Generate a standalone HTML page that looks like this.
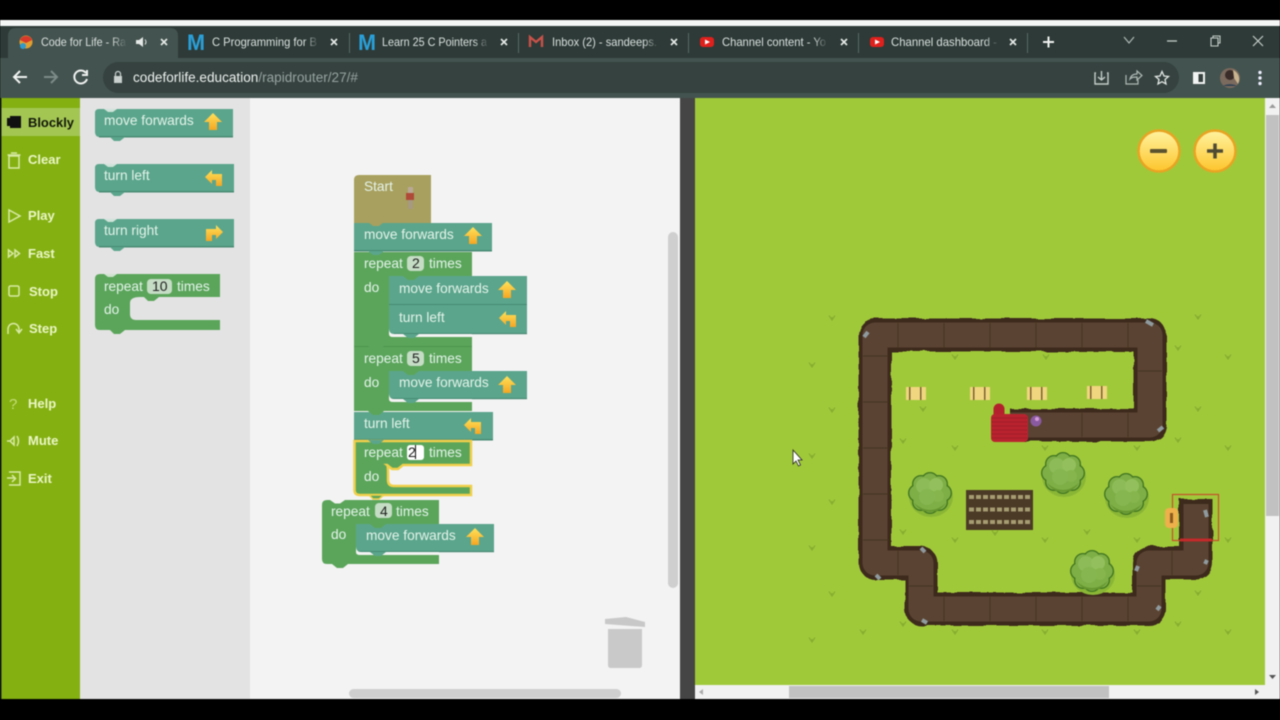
<!DOCTYPE html>
<html><head><meta charset="utf-8"><title>Code for Life</title>
<style>
html,body{margin:0;padding:0;background:#000;width:1280px;height:720px;overflow:hidden}
svg{display:block;font-family:"Liberation Sans",Arial,sans-serif;filter:blur(.4px)}
.tab{font-size:12px;fill:#d9e0de}
.side{font-size:13px;font-weight:bold;fill:#eaf6c4}
.b{font-size:13.7px;fill:#e4f3ea}
.f{font-size:14px;fill:#222}
.ic{fill:none;stroke:#d8e9a4;stroke-width:1.5}
.x{stroke:#e4e8e6;stroke-width:1.7;fill:none}
.tl{stroke:#c4cdca;stroke-width:1.4;fill:none}
</style></head><body>
<svg width="1280" height="720" viewBox="0 0 1280 720" xmlns="http://www.w3.org/2000/svg">
<defs>
<linearGradient id="y" x1="0" y1="0" x2="0" y2="1"><stop offset="0" stop-color="#ffe25a"/><stop offset="1" stop-color="#f5a623"/></linearGradient>
<linearGradient id="z" x1="0" y1="0" x2="0" y2="1"><stop offset="0" stop-color="#fff3a0"/><stop offset="1" stop-color="#fdc52c"/></linearGradient>
<linearGradient id="fa"><stop offset="0" stop-color="#43534f" stop-opacity="0"/><stop offset="1" stop-color="#43534f"/></linearGradient>
<linearGradient id="fb"><stop offset="0" stop-color="#2d3a37" stop-opacity="0"/><stop offset="1" stop-color="#2d3a37"/></linearGradient>
<filter id="wob"><feTurbulence type="fractalNoise" baseFrequency="0.07" numOctaves="2" seed="4"/><feDisplacementMap in="SourceGraphic" scale="4"/></filter>
<symbol id="up" overflow="visible"><path d="M0-9 9 0H4V8H-4V0H-9Z" fill="url(#y)"/></symbol>
<symbol id="lf" overflow="visible"><path d="M-9-1-2-8V-4H8V8H2V2H-2V6Z" fill="url(#y)"/></symbol>
<symbol id="rt" overflow="visible"><path d="M9-1 2-8V-4H-8V8H-2V2H2V6Z" fill="url(#y)"/></symbol>
<symbol id="t" overflow="visible"><path d="M-3-2.500 0 2 3-2.500M0 2V-1" stroke="#86ae30" stroke-width="1.200" fill="none"/></symbol>
<symbol id="hay" overflow="visible"><rect x="0" y="0" width="20" height="13" fill="#f0d67f"/><rect x="3" width="1.500" height="13" fill="#7a6330"/><rect x="14" width="1.500" height="13" fill="#7a6330"/></symbol>
<symbol id="bush" overflow="visible"><ellipse cx="1" cy="4" rx="22" ry="20" fill="#8ab636"/>
<g fill="#3f7420"><circle cx="13" cy="0" r="9"/><circle cx="9" cy="9" r="9"/><circle cx="0" cy="12" r="9"/><circle cx="-9" cy="9" r="9"/><circle cx="-13" cy="0" r="9"/><circle cx="-9" cy="-9" r="9"/><circle cx="0" cy="-12" r="9"/><circle cx="9" cy="-9" r="9"/></g>
<g fill="#7eae46"><circle cx="13" cy="0" r="7.700"/><circle cx="9" cy="9" r="7.700"/><circle cx="0" cy="12" r="7.700"/><circle cx="-9" cy="9" r="7.700"/><circle cx="-13" cy="0" r="7.700"/><circle cx="-9" cy="-9" r="7.700"/><circle cx="0" cy="-12" r="7.700"/><circle cx="9" cy="-9" r="7.700"/><circle r="15"/></g>
<circle cx="-6" cy="-7" r="8" fill="#8cbb58"/><circle cx="6" cy="-8" r="7" fill="#93c05c"/><circle cx="8" cy="3" r="6" fill="#86b54e"/><circle cx="-3" cy="4" r="8" fill="#86b650"/><path d="M-16 10Q0 24 16 10Q10 19 0 19Q-10 19-16 10Z" fill="#66962f"/></symbol>
<symbol id="c" overflow="visible"><path d="M-3-3 3 3M3-3-3 3" class="x"/></symbol>
</defs>
<rect width="1280" height="720" fill="#000"/>
<rect y="20" width="1280" height="6" fill="#f4f6f5"/>
<rect y="26" width="1280" height="32" fill="#2d3a37"/>
<rect y="58" width="1280" height="40" fill="#43534f"/>
<path d="M8 58V36Q8 28 16 28H170Q178 28 178 36V58Z" fill="#43534f"/>
<rect x="103" y="62" width="1076" height="31" rx="15.500" fill="#35423f"/>
<!-- tabs -->
<circle cx="26" cy="42" r="6.500" fill="#e0a030"/><path d="M20 40A6.500 6.500 0 0 1 32 40L26 43Z" fill="#d8392b"/><circle cx="23" cy="46" r="3" fill="#2e9ad0"/>
<text x="41" y="46" class="tab" textLength="85" lengthAdjust="spacingAndGlyphs">Code for Life - Ra</text>
<rect x="112" y="34" width="15" height="16" fill="url(#fa)"/>
<path d="M136 40H139L143 37V47L139 44H136Z" fill="#e4e8e6"/><path d="M145 39.500Q147 42 145 44.500" stroke="#e4e8e6" fill="none"/>
<use href="#c" x="164" y="42"/>
<text x="187" y="50" font-size="22" font-weight="bold" fill="#2a9fd8" textLength="18" lengthAdjust="spacingAndGlyphs">M</text>
<text x="212" y="46" class="tab" textLength="105" lengthAdjust="spacingAndGlyphs">C Programming for B</text>
<rect x="304" y="34" width="15" height="16" fill="url(#fb)"/>
<use href="#c" x="334" y="42"/>
<rect x="349" y="33" width="1" height="20" fill="#5a6a66"/>
<text x="358" y="50" font-size="22" font-weight="bold" fill="#2a9fd8" textLength="18" lengthAdjust="spacingAndGlyphs">M</text>
<text x="382" y="46" class="tab" textLength="105" lengthAdjust="spacingAndGlyphs">Learn 25 C Pointers a</text>
<rect x="474" y="34" width="15" height="16" fill="url(#fb)"/>
<use href="#c" x="504" y="42"/>
<rect x="518" y="33" width="1" height="20" fill="#5a6a66"/>
<path d="M530 47V37L536 42 542 37V47" fill="none" stroke="#c9524a" stroke-width="2.400"/>
<text x="552" y="46" class="tab" textLength="105" lengthAdjust="spacingAndGlyphs">Inbox (2) - sandeeps.</text>
<rect x="644" y="34" width="15" height="16" fill="url(#fb)"/>
<use href="#c" x="674" y="42"/>
<rect x="688" y="33" width="1" height="20" fill="#5a6a66"/>
<rect x="700" y="37" width="14" height="10" rx="3" fill="#e0201c"/><path d="M705 39.500 710 42 705 44.500Z" fill="#fff"/>
<text x="722" y="46" class="tab" textLength="104" lengthAdjust="spacingAndGlyphs">Channel content - Yo</text>
<rect x="813" y="34" width="15" height="16" fill="url(#fb)"/>
<use href="#c" x="844" y="42"/>
<rect x="858" y="33" width="1" height="20" fill="#5a6a66"/>
<rect x="870" y="37" width="14" height="10" rx="3" fill="#e0201c"/><path d="M875 39.500 880 42 875 44.500Z" fill="#fff"/>
<text x="891" y="46" class="tab" textLength="106" lengthAdjust="spacingAndGlyphs">Channel dashboard -</text>
<rect x="985" y="34" width="14" height="16" fill="url(#fb)"/>
<use href="#c" x="1013" y="42"/>
<rect x="1027" y="33" width="1" height="20" fill="#5a6a66"/>
<path d="M1043 42H1054M1048.500 36.500V47.500" stroke="#f0f2f1" stroke-width="2" fill="none"/>
<path d="M1124 37 1129 43 1134 37" stroke="#b0bab7" stroke-width="1.200" fill="none"/>
<path d="M1167 41H1177" stroke="#c5cdca" stroke-width="1.300"/>
<path d="M1211 38H1218V46H1211ZM1213 38V36H1220V43H1218" stroke="#c5cdca" stroke-width="1.100" fill="none"/>
<path d="M1253 36 1263 46M1263 36 1253 46" stroke="#c5cdca" stroke-width="1.200"/>
<!-- toolbar -->
<path d="M27 77H14M20 71 14 77 20 83" stroke="#f0f3f2" stroke-width="2" fill="none"/>
<path d="M44 77H57M51 71 57 77 51 83" stroke="#7d8b88" stroke-width="2" fill="none"/>
<path d="M86 73A6.500 6.500 0 1 0 87 79M87 70V75H82" stroke="#eef1f0" stroke-width="2" fill="none"/>
<rect x="114" y="76" width="8" height="7" fill="#c9d0ce"/><path d="M115.500 76V74A2.500 2.500 0 0 1 120.500 74V76" stroke="#c9d0ce" fill="none" stroke-width="1.200"/>
<text x="133" y="82" font-size="13.500" textLength="225" lengthAdjust="spacingAndGlyphs"><tspan fill="#eef1f0">codeforlife.education</tspan><tspan fill="#96a3a0">/rapidrouter/27/#</tspan></text>
<path d="M1096 73H1095V84H1108V73H1107M1101.500 71V80M1098 77 1101.500 80 1105 77" class="tl"/>
<path d="M1126 75V84H1138V80M1130 79C1131 75 1134 74 1137 74V71L1142 75.500 1137 80V77C1134 77 1132 77 1130 79Z" style="fill:none;stroke:#aeb8b5;stroke-width:1.200"/>
<path d="M1162 71.500 1164 76 1168.500 76.500 1165 79.500 1166 84 1162 81.700 1158 84 1159 79.500 1155.500 76.500 1160 76Z" fill="none" stroke="#e2e7e5" stroke-width="1.300"/>
<rect x="1193" y="72" width="12" height="12" fill="#f2f4f3"/><rect x="1198.500" y="74" width="4.500" height="8" fill="#35423f"/>
<circle cx="1230" cy="78" r="10" fill="#7b6a5e"/><circle cx="1230" cy="75" r="5" fill="#3a2c28"/><path d="M1233 70A10 10 0 0 1 1238 84L1234 78Z" fill="#c9b48f"/><path d="M1223 86A10 6 0 0 1 1237 86Z" fill="#2d4055"/>
<circle cx="1260" cy="72.500" r="1.700" fill="#eef"/><circle cx="1260" cy="78" r="1.700" fill="#eef"/><circle cx="1260" cy="83.500" r="1.700" fill="#eef"/>
<!-- page -->
<rect y="98" width="80" height="601" fill="#84b012"/>
<rect width="1.500" y="98" height="601" fill="#16200a"/>
<rect x="80" y="98" width="170" height="601" fill="#e3e3e3"/>
<rect x="250" y="98" width="430" height="601" fill="#f3f3f3"/>
<rect x="680" y="98" width="15" height="601" fill="#454545"/>
<rect x="695" y="98" width="570" height="587" fill="#a0c93a"/>
<rect x="1265" y="98" width="15" height="601" fill="#f1f1f1"/>
<rect x="1266" y="115" width="13" height="401" fill="#c1c1c1"/>
<path d="M1269 108 1272.500 104 1276 108Z" fill="#9a9a9a"/><path d="M1269 675 1272.500 679 1276 675Z" fill="#555"/>
<rect x="695" y="685" width="570" height="14" fill="#f1f1f1"/>
<rect x="789" y="686" width="320" height="12" fill="#c1c1c1"/>
<path d="M1255 689 1259 692 1255 695Z" fill="#555"/><path d="M703 689 699 692 703 695Z" fill="#aaa"/>
<!-- sidebar -->
<rect x="1.500" y="108" width="78.500" height="28" fill="#a3c653"/>
<path d="M7 118H10V116H20V128H10V126H7Z" fill="#111"/><rect x="15" y="116" width="6" height="12" fill="#111"/>
<text x="28" y="127" class="side" style="fill:#13180a" textLength="46" lengthAdjust="spacingAndGlyphs">Blockly</text>
<path d="M9 156H19V168H9ZM7.500 155H20.500M11 153H17" class="ic"/>
<text x="28" y="164" class="side">Clear</text>
<path d="M9 210 20 216 9 222Z" class="ic"/>
<text x="28" y="220" class="side">Play</text>
<path d="M8.500 250 13 253.500 8.500 257ZM15 250 19.500 253.500 15 257Z" class="ic"/>
<text x="28" y="258" class="side">Fast</text>
<rect x="9" y="286" width="10" height="10" rx="1.500" class="ic"/>
<text x="29" y="296" class="side">Stop</text>
<path d="M9 334V329A5.500 5.500 0 0 1 20 329V332M17 329 20 333 23 329" class="ic" transform="translate(-1 0)"/>
<text x="29" y="333" class="side">Step</text>
<text x="9" y="409" font-size="15" fill="#c4de78">?</text>
<text x="28" y="408" class="side">Help</text>
<path d="M7 441H10L14 437V445L10 441M17 436Q20 441 17 446" class="ic"/>
<text x="28" y="445" class="side">Mute</text>
<path d="M9 472H20V485H9M7 478H15M12 475 15.500 478.500 12 482" class="ic"/>
<text x="28" y="483" class="side">Exit</text>
<!-- palette -->
<g>
<path d="M95 113Q95 109 99 109H233V137H100Q95 137 95 132Z" fill="#5ba58c"/><rect x="99" y="136" width="134" height="1.500" fill="#478a73"/>
<path d="M104 109 108 112H113L117 109Z" fill="#cfe3da"/><path d="M110 137 114 141H120L125 137Z" fill="#5ba58c"/>
<text x="104" y="125" class="b">move forwards</text><use href="#up" x="213" y="122"/>
<path d="M95 168Q95 164 99 164H234V192H100Q95 192 95 187Z" fill="#5ba58c"/><rect x="99" y="191" width="135" height="1.500" fill="#478a73"/>
<path d="M104 164 108 167H113L117 164Z" fill="#cfe3da"/><path d="M110 192 114 196H120L125 192Z" fill="#5ba58c"/>
<text x="104" y="180" class="b">turn left</text><use href="#lf" x="214" y="178"/>
<path d="M95 223Q95 219 99 219H234V247H100Q95 247 95 242Z" fill="#5ba58c"/><rect x="99" y="246" width="135" height="1.500" fill="#478a73"/>
<path d="M104 219 108 222H113L117 219Z" fill="#cfe3da"/><path d="M110 247 114 251H120L125 247Z" fill="#5ba58c"/>
<text x="104" y="235" class="b">turn right</text><use href="#rt" x="214" y="233"/>
<path d="M95 279Q95 274 100 274H220V297H140Q130 297 130 303V314Q130 320 136 320H220V330H100Q95 330 95 325Z" fill="#5ba55b"/>
<path d="M110 330 114 334H120L125 330Z" fill="#5ba55b"/><path d="M144 297 148 301H154L159 297Z" fill="#5ba55b"/>
<path d="M104 274 108 277H113L117 274Z" fill="#cfe3cf"/>
<text x="104" y="291" class="b">repeat</text><rect x="147" y="279" width="25" height="15" rx="4" fill="#c5dcc5"/><text x="152" y="291" class="f">10</text><text x="177" y="291" class="b">times</text>
<text x="104" y="314" class="b">do</text>
</g>
<!-- workspace blocks -->
<g>
<path d="M354 180Q354 175 359 175H431V223H354Z" fill="#a8a05e"/>
<text x="364" y="191" class="b">Start</text>
<rect x="408" y="187" width="5" height="6" fill="#b9a898"/><rect x="406" y="193" width="8" height="7" fill="#b04a38"/><rect x="408" y="200" width="5" height="9" fill="#a69a80"/>
<rect x="354" y="223" width="138" height="28" fill="#5ba58c"/><rect x="354" y="250" width="138" height="1.500" fill="#478a73"/>
<path d="M368 222H384L379 226H373Z" fill="#a8a05e"/>
<text x="364" y="239" class="b">move forwards</text><use href="#up" x="473" y="236"/>
<rect x="354" y="252" width="118" height="95" fill="#5ba55b"/>
<path d="M368 251H384L379 255H373Z" fill="#5ba58c"/>
<text x="364" y="268" class="b">repeat</text><rect x="407" y="256" width="17" height="15" rx="4" fill="#c5dcc5"/><text x="412" y="268" class="f">2</text><text x="429" y="268" class="b">times</text>
<text x="364" y="292" class="b">do</text>
<rect x="389" y="276" width="138" height="29" fill="#5ba58c"/><rect x="389" y="304" width="138" height="1.200" fill="#478a73"/>
<path d="M403 276H419L414 280H408Z" fill="#5ba55b"/>
<text x="399" y="293" class="b">move forwards</text><use href="#up" x="507" y="290"/>
<rect x="389" y="305" width="138" height="29" fill="#5ba58c"/><rect x="394" y="333" width="133" height="1.200" fill="#478a73"/>
<path d="M403 305H419L414 309H408Z" fill="#5ba58c"/>
<path d="M389 328V334Q389 337 393 337H472V334H394Q389 334 389 328Z" fill="#f3f3f3"/>
<path d="M403 334H419L414 338H408Z" fill="#5ba58c"/>
<text x="399" y="322" class="b">turn left</text><use href="#lf" x="508" y="319"/>
<rect x="354" y="347" width="118" height="64" fill="#5ba55b"/><rect x="354" y="346" width="118" height="1" fill="#4b944b"/>
<path d="M368 346H384L379 350H373Z" fill="#5ba55b"/>
<text x="364" y="363" class="b">repeat</text><rect x="407" y="351" width="17" height="15" rx="4" fill="#c5dcc5"/><text x="412" y="363" class="f">5</text><text x="429" y="363" class="b">times</text>
<text x="364" y="387" class="b">do</text>
<rect x="389" y="371" width="138" height="28" fill="#5ba58c"/><rect x="389" y="398" width="138" height="1.200" fill="#478a73"/>
<path d="M403 371H419L414 375H408Z" fill="#5ba55b"/>
<path d="M389 393V399Q389 402 393 402H472V399H394Q389 399 389 393Z" fill="#f3f3f3"/>
<path d="M403 399H419L414 403H408Z" fill="#5ba58c"/>
<text x="399" y="387" class="b">move forwards</text><use href="#up" x="507" y="385"/>
<rect x="354" y="412" width="139" height="28" fill="#5ba58c"/><rect x="354" y="439" width="139" height="1.500" fill="#478a73"/>
<path d="M368 411H384L379 415H373Z" fill="#5ba55b"/>
<text x="364" y="428" class="b">turn left</text><use href="#lf" x="473" y="426"/>
<path d="M354.500 441H471V465H403L398 469H392L387 465Q388 465 388 472V480Q388 486 394 486H471V495H360Q354.500 495 354.500 490Z" fill="#5ba55b" stroke="#f0d04a" stroke-width="2.500"/>
<path d="M368 440H384L379 444H373Z" fill="#5ba58c"/>
<path d="M369 495 373 499H379L384 495Z" fill="#5ba55b" stroke="#f0d04a" stroke-width="1.500"/>
<text x="364" y="457" class="b">repeat</text><rect x="407" y="445" width="17" height="15" rx="3" fill="#fff"/><text x="408" y="457" class="f">2</text><rect x="415" y="445" width="1" height="14" fill="#111"/><text x="429" y="457" class="b">times</text>
<text x="364" y="481" class="b">do</text>
<path d="M322 505Q322 500 327 500H439V524H357V553H439V564H348L343 568H337L332 564H327Q322 564 322 559Z" fill="#5ba55b"/>
<path d="M330 500 335 503.500H340L345 500Z" fill="#f3f3f3"/>
<text x="331" y="516" class="b">repeat</text><rect x="375" y="503" width="17" height="15" rx="4" fill="#c5dcc5"/><text x="380" y="516" class="f">4</text><text x="396" y="516" class="b">times</text>
<text x="331" y="539" class="b">do</text>
<rect x="356" y="524" width="138" height="28" fill="#5ba58c"/><rect x="356" y="551" width="138" height="1.200" fill="#478a73"/>
<path d="M370 524H386L381 528H375Z" fill="#5ba55b"/>
<path d="M356 546V552Q356 555 360 555H439V552H361Q356 552 356 546Z" fill="#f3f3f3"/>
<path d="M370 552H386L381 556H375Z" fill="#5ba58c"/>
<text x="366" y="540" class="b">move forwards</text><use href="#up" x="475" y="537"/>
</g>
<!-- trash & scrollbars -->
<path d="M605 619 626 617 645 622V627L605 624Z" fill="#c8c8c8"/>
<path d="M608 629H642V665Q642 668 639 668H611Q608 668 608 665Z" fill="#c9c9c9"/>
<rect x="668" y="232" width="10" height="356" rx="5" fill="#cfcfcf"/>
<rect x="349" y="689" width="272" height="9" rx="4.500" fill="#cfcfcf"/>
<!-- game -->
<g>
<use href="#t" x="832" y="318"/><use href="#t" x="812" y="365"/><use href="#t" x="832" y="410"/><use href="#t" x="812" y="456"/><use href="#t" x="832" y="502"/><use href="#t" x="812" y="548"/><use href="#t" x="832" y="594"/><use href="#t" x="812" y="640"/>
<use href="#t" x="955" y="357"/><use href="#t" x="1046" y="357"/><use href="#t" x="1178" y="348"/><use href="#t" x="1198" y="317"/><use href="#t" x="923" y="409"/><use href="#t" x="903" y="441"/><use href="#t" x="955" y="448"/><use href="#t" x="1045" y="448"/><use href="#t" x="1137" y="448"/><use href="#t" x="1178" y="440"/><use href="#t" x="1198" y="409"/><use href="#t" x="1228" y="357"/><use href="#t" x="1228" y="448"/><use href="#t" x="903" y="532"/><use href="#t" x="955" y="540"/><use href="#t" x="995" y="533"/><use href="#t" x="1045" y="540"/><use href="#t" x="1087" y="532"/><use href="#t" x="1137" y="540"/><use href="#t" x="1228" y="540"/><use href="#t" x="1198" y="593"/><use href="#t" x="1178" y="624"/><use href="#t" x="1137" y="632"/><use href="#t" x="1045" y="632"/><use href="#t" x="955" y="632"/><use href="#t" x="903" y="624"/><use href="#t" x="863" y="632"/><use href="#t" x="1228" y="632"/>
<path filter="url(#wob)" d="M1010 425H1150V335H875V563H921V609H1149V563H1196V499" fill="none" stroke="#3d2b1a" stroke-width="33" stroke-linejoin="round"/>
<path d="M1010 425H1150V335H875V563H921V609H1149V563H1196V504" fill="none" stroke="#5a4332" stroke-width="25" stroke-linejoin="round"/>
<path d="M898 323V348M944 323V348M990 323V348M1036 323V348M1082 323V348M1128 323V348M863 356H888M863 402H888M863 448H888M863 494H888M863 540H888M944 597V621M990 597V621M1036 597V621M1082 597V621M1128 597V621M898 551V575M909 586H933M1137 586H1161M1172 551V575M1184 540H1208M1138 371H1162M1082 413V437M1128 413V437" stroke="#46331f" stroke-width="1" fill="none"/>
<path d="M1146 321 1153 325M864 337 868 332M876 575 880 579M921 548 925 552M922 620 927 623M1138 566 1136 571M1160 606 1157 610M1205 510 1207 517M1207 560 1205 564M1163 427 1158 431" stroke="#8f9a9e" stroke-width="4"/>
<circle cx="999" cy="409" r="5.500" fill="#b3212c"/><rect x="993.500" y="409" width="11" height="7" fill="#b3212c"/>
<rect x="991" y="414" width="37" height="28" rx="4" fill="#b9232f"/><path d="M992 418H1027M992 422H1027M992 426H1027M992 430H1027M992 434H1027M992 438H1027" stroke="#a01c28" stroke-width="1"/>
<circle cx="1036" cy="421" r="5.500" fill="#8a5aa0"/><circle cx="1037" cy="419" r="2" fill="#d39ad8"/>
<use href="#hay" x="906" y="387"/><use href="#hay" x="970" y="387"/><use href="#hay" x="1027" y="387"/><use href="#hay" x="1087" y="386"/>
<use href="#bush" x="930" y="493"/><use href="#bush" x="1063" y="473"/><use href="#bush" x="1126" y="494"/><use href="#bush" x="1092" y="571"/>
<rect x="966" y="490" width="67" height="40" fill="#4b3a26"/>
<path d="M969 497H1030M969 509.500H1030M969 522H1030" stroke="#a69c72" stroke-width="4" stroke-dasharray="5 2" fill="none"/>
<rect x="1172.500" y="494.500" width="46" height="46" fill="none" stroke="#c5502a" stroke-width="1.200"/>
<rect x="1180" y="538.500" width="32" height="3" fill="#c22a2a"/>
<rect x="1165" y="508" width="13" height="20" rx="4" fill="#eeb04a"/><rect x="1170" y="513" width="3" height="10" fill="#8a5a20"/>
</g>
<circle cx="1159" cy="151" r="20.500" fill="url(#z)" stroke="#e8a422" stroke-width="2.500"/>
<circle cx="1215" cy="151" r="20.500" fill="url(#z)" stroke="#e8a422" stroke-width="2.500"/>
<rect x="1150" y="149" width="17" height="4" rx="1" fill="#5b5330"/>
<path d="M1207 151H1223M1215 143.500V158.500" stroke="#4e4a33" stroke-width="3.500" fill="none"/>
<path d="M793 450V464L796 461 798.500 466 800.500 465 798 460H802Z" fill="#fff" stroke="#222" stroke-width="0.800"/>
</svg>
</body></html>
